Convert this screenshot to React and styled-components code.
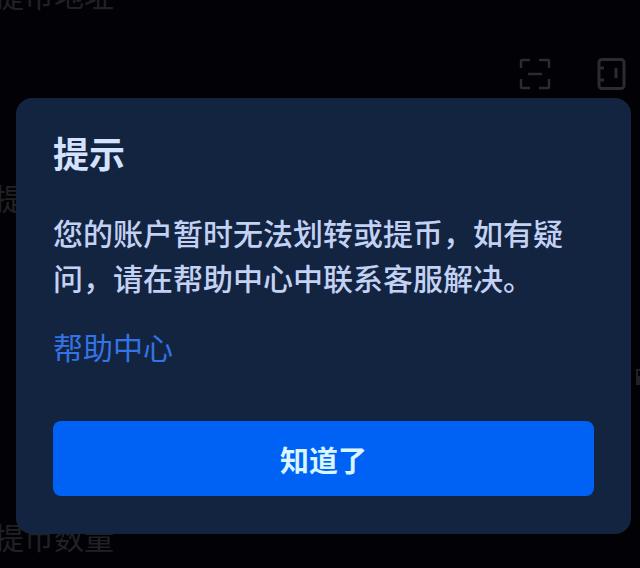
import React, { useState } from 'react';
import styled, { createGlobalStyle } from 'styled-components';

const GlobalStyle = createGlobalStyle`
  * {
    box-sizing: border-box;
  }
  body {
    margin: 0;
    overflow: hidden;
    background: #010106;
    font-family: "Noto Sans CJK SC", "Noto Sans", sans-serif;
  }
`;

// scan code icon
const ScanIcon = () => (
  <svg width="32" height="32" viewBox="0 0 32 32" fill="none" stroke="currentColor" strokeWidth="2.5">
    <path d="M2 10V3q0-1 1-1h8M20 2h9q1 0 1 1v7M30 21v8q0 1-1 1h-9M11 30H3q-1 0-1-1v-8M9 16h14" />
  </svg>
);

// address book icon
const BookIcon = () => (
  <svg width="32" height="32" viewBox="0 0 32 32" fill="none" stroke="currentColor" strokeWidth="3">
    <rect x="4" y="1.5" width="25" height="29" rx="3" />
    <path d="M4 10h5M4 22h5M21 10v10" />
  </svg>
);

// right end of the network row
const RowMark = () => (
  <svg width="4" height="20" viewBox="0 0 4 20" fill="none" stroke="currentColor" strokeWidth="2">
    <path d="M4 2H1v15M3 8v9" />
  </svg>
);

const App = () => {
  const [open, setOpen] = useState(true);

  return (
    <>
      <GlobalStyle />
      <Page>
        <Field $height={203}>
          <FieldLabel>提币地址</FieldLabel>
          <Tools>
            <ToolButton type="button" aria-label="扫一扫"><ScanIcon /></ToolButton>
            <ToolButton type="button" aria-label="地址簿"><BookIcon /></ToolButton>
          </Tools>
        </Field>
        <Field $height={339}>
          <FieldLabel>提</FieldLabel>
          <RowEnd><RowMark /></RowEnd>
        </Field>
        <Field>
          <FieldLabel>提币数量</FieldLabel>
        </Field>
      </Page>
      {open && (
        <Overlay>
          <Dialog role="dialog" aria-modal="true" aria-labelledby="tip-title">
            <Title id="tip-title">提示</Title>
            <Message>您的账户暂时无法划转或提币，如有疑问，请在帮助中心中联系客服解决。</Message>
            <HelpLink href="#help">帮助中心</HelpLink>
            <ConfirmButton type="button" onClick={() => setOpen(false)}>知道了</ConfirmButton>
          </Dialog>
        </Overlay>
      )}
    </>
  );
};
export default App;


// page behind the dialog, scrolled up a little
const Page = styled.main`
  display: flow-root;
  margin-left: -6px;
  margin-top: -26px;
  color: #212125;
`;

const Field = styled.section`
  min-height: ${props => (props.$height ? `${props.$height}px` : 'auto')};
`;

const FieldLabel = styled.div`
  font-size: 30px;
  line-height: 40px;
`;

const Tools = styled.div`
  display: flex;
  justify-content: flex-end;
  gap: 44px;
  padding: 44px 13px 0 0;
`;

const ToolButton = styled.button`
  display: flex;
  padding: 0;
  border: 0;
  background: none;
  color: #2b2b30;
`;

const RowEnd = styled.div`
  display: flex;
  justify-content: flex-end;
  padding-top: 151px;
`;

const Overlay = styled.div`
  position: fixed;
  inset: 0;
  display: flex;
  align-items: flex-end;
  padding: 0 9px 34px 16px;
`;

const Dialog = styled.div`
  display: flex;
  flex-direction: column;
  align-items: flex-start;
  width: 100%;
  padding: 28px 37px 38px;
  border-radius: 16px;
  background: #132440;
`;

const Title = styled.h2`
  margin: 0;
  font-size: 36px;
  font-weight: 700;
  line-height: 52px;
  color: #d4e1ff;
`;

const Message = styled.p`
  margin: 32px 0 0;
  font-size: 30px;
  font-weight: 500;
  line-height: 45px;
  color: #c3d2f4;
`;

const HelpLink = styled.a`
  margin-top: 24px;
  font-size: 30px;
  line-height: 45px;
  color: #3473e6;
  text-decoration: none;
`;

const ConfirmButton = styled.button`
  width: 100%;
  height: 75px;
  margin-top: 52px;
  border: 0;
  border-radius: 8px;
  background: #0062f5;
  font-family: inherit;
  font-size: 29px;
  font-weight: 700;
  color: #d9f5ff;
  cursor: pointer;
`;
